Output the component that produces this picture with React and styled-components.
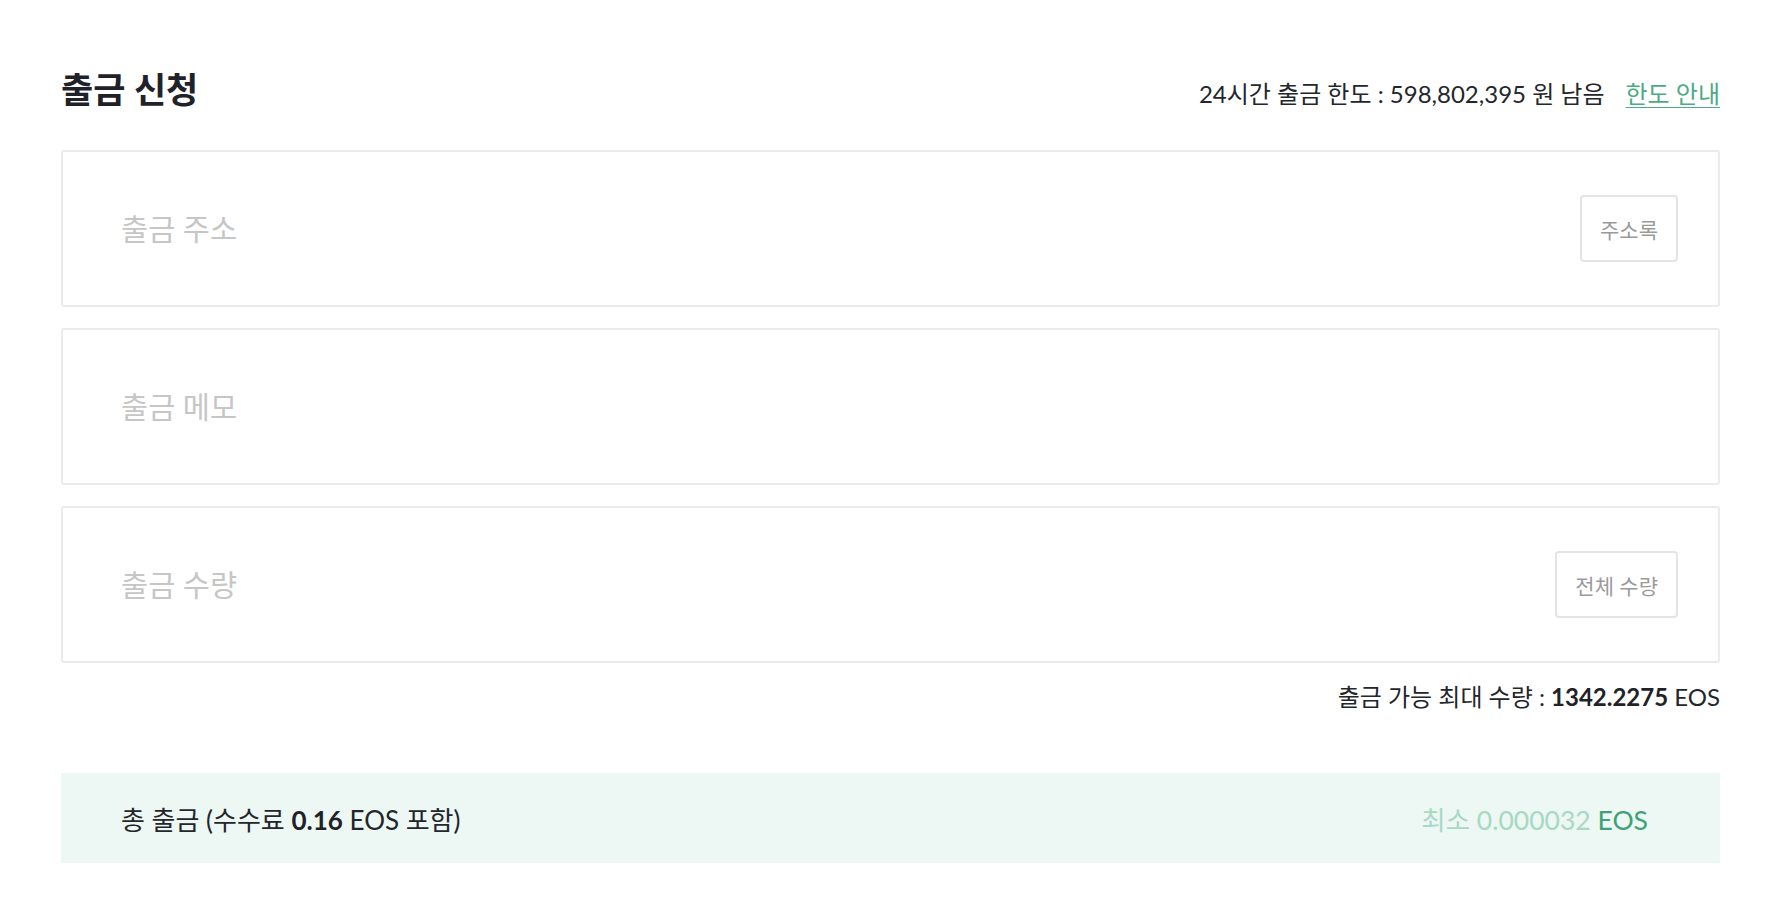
import React, { useState } from 'react';
import styled, { createGlobalStyle } from 'styled-components';

const GlobalStyle = createGlobalStyle`
  html, body {
    margin: 0;
    padding: 0;
    background: #ffffff;
  }
  body {
    font-family: Lato, 'Noto Sans CJK KR', sans-serif;
    color: #23262b;
  }
  * {
    box-sizing: border-box;
  }
`;

const Page = styled.div`
  width: 1659px;
  margin-left: 61px;
  padding-top: 68px;
`;

const Header = styled.div`
  display: flex;
  justify-content: space-between;
  align-items: baseline;
  margin-bottom: 40px;
`;

const Title = styled.h2`
  margin: 0;
  font-size: 35px;
  line-height: 42px;
  font-weight: 700;
  color: #1f2329;
`;

const Limit = styled.div`
  display: flex;
  align-items: baseline;
  gap: 21px;
  font-size: 24px;
  color: #23262b;
`;

const GuideLink = styled.a`
  color: #4cab83;
  text-decoration: underline;
  text-underline-offset: 4px;
  text-decoration-thickness: 1px;
  cursor: pointer;
`;

const Fields = styled.div`
  display: flex;
  flex-direction: column;
  gap: 21px;
`;

const Field = styled.div`
  display: flex;
  align-items: center;
  height: 157px;
  padding: 0 40px 0 58px;
  border: 2px solid #ebebeb;
  border-radius: 3px;
  background: #fff;
`;

const Input = styled.input`
  flex: 1;
  min-width: 0;
  border: none;
  outline: none;
  background: transparent;
  font-family: Lato, 'Noto Sans CJK KR', sans-serif;
  font-size: 29.5px;
  color: #23262b;
  padding: 0;

  &::placeholder {
    color: #c6c6c6;
  }
`;

const SideButton = styled.button`
  height: 67px;
  padding: 0 18px;
  border: 2px solid #e4e4e4;
  border-radius: 4px;
  background: #fff;
  font-family: Lato, 'Noto Sans CJK KR', sans-serif;
  font-size: 21px;
  color: #9a9a9a;
  cursor: pointer;
`;

const MaxLine = styled.div`
  margin-top: 20px;
  text-align: right;
  font-size: 24px;
  line-height: 28px;
  color: #23262b;

  strong {
    font-weight: 700;
    color: #1f2329;
  }
`;

const Summary = styled.div`
  display: flex;
  justify-content: space-between;
  align-items: center;
  height: 90px;
  margin-top: 62px;
  padding: 0 72px 0 60px;
  background: #edf7f3;
  font-size: 26px;
  color: #23262b;

  strong {
    font-weight: 700;
    color: #1f2329;
  }
`;

const MinAmount = styled.div`
  font-size: 26.5px;
  color: #a7d9c4;
`;

const Unit = styled.span`
  color: ${({ tone }) => tone || '#3fa277'};
`;

const fields = [
  { key: 'address', placeholder: '출금 주소', button: '주소록' },
  { key: 'memo', placeholder: '출금 메모' },
  { key: 'amount', placeholder: '출금 수량', button: '전체 수량' },
];

const App = () => {
  const [values, setValues] = useState({ address: '', memo: '', amount: '' });

  return (
    <>
      <GlobalStyle />
      <Page>
        <Header>
          <Title>출금 신청</Title>
          <Limit>
            <span>24시간 출금 한도 : 598,802,395 원 남음</span>
            <GuideLink>한도 안내</GuideLink>
          </Limit>
        </Header>

        <Fields>
          {fields.map((f) => (
            <Field key={f.key}>
              <Input
                placeholder={f.placeholder}
                value={values[f.key]}
                onChange={(e) => setValues((prev) => ({ ...prev, [f.key]: e.target.value }))}
              />
              {f.button && <SideButton>{f.button}</SideButton>}
            </Field>
          ))}
        </Fields>

        <MaxLine>
          출금 가능 최대 수량 : <strong>1342.2275</strong> EOS
        </MaxLine>

        <Summary>
          <span>
            총 출금 (수수료 <strong>0.16</strong> EOS 포함)
          </span>
          <MinAmount>
            최소 0.000032 <Unit>EOS</Unit>
          </MinAmount>
        </Summary>
      </Page>
    </>
  );
};

export default App;
